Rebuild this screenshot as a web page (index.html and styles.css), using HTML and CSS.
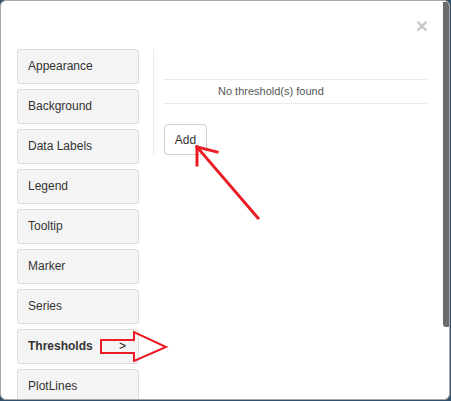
FILE: index.html
```html
<!DOCTYPE html>
<html>
<head>
<meta charset="utf-8">
<link rel="stylesheet" href="styles.css">
</head>
<body>
<div class="modal">
  <div class="modal-header">
    <span class="close">&times;</span>
  </div>
  <div class="modal-body">
    <nav class="nav">
      <div class="nav-item">Appearance</div>
      <div class="nav-item">Background</div>
      <div class="nav-item">Data Labels</div>
      <div class="nav-item">Legend</div>
      <div class="nav-item">Tooltip</div>
      <div class="nav-item">Marker</div>
      <div class="nav-item">Series</div>
      <div class="nav-item active"><span>Thresholds</span><span class="caret">&gt;</span></div>
      <div class="nav-item">PlotLines</div>
    </nav>
    <section class="content">
      <div class="empty-row">No threshold(s) found</div>
      <button class="add-btn">Add</button>
    </section>
  </div>
  <div class="scroll-thumb"></div>
  <svg class="annotations" width="450" height="400" viewBox="0 0 450 400">
    <g stroke="#ec1c24" fill="none" stroke-linecap="square" stroke-linejoin="miter">
      <path d="M258 218 L197 147" stroke-width="3"/>
      <path d="M197 147 L217 152" stroke-width="3"/>
      <path d="M197 147 L197 165" stroke-width="3"/>
      <polygon points="101,340 134,340 134,332 166,347 134,361 134,353 101,353" stroke-width="2"/>
    </g>
  </svg>
</div>
</body>
</html>
```
FILE: styles.css
```css
* { box-sizing: border-box; }
html, body { margin: 0; padding: 0; }
body {
  background: #34516c;
  font-family: "Liberation Sans", Arial, sans-serif;
  width: 451px;
  height: 401px;
  overflow: hidden;
}
.modal {
  position: relative;
  width: 450px;
  height: 400px;
  background: #fff;
  border: 1px solid #a8a8a8;
  border-radius: 6px;
  padding-left: 16px;
  overflow: hidden;
}
.modal-header {
  height: 48px;
  display: flex;
  justify-content: flex-end;
  align-items: flex-start;
  padding-top: 14px;
  padding-right: 21px;
}
.close {
  font-size: 21px;
  font-weight: bold;
  line-height: 1;
  color: #c9c9c9;
}
.modal-body {
  display: flex;
  align-items: flex-start;
}
.nav {
  width: 122px;
  display: flex;
  flex-direction: column;
  gap: 5px;
}
.nav-item {
  height: 35px;
  display: flex;
  align-items: center;
  justify-content: space-between;
  padding: 0 12px 2px 10px;
  background: #f4f4f4;
  border: 1px solid #dcdcdc;
  border-radius: 3px;
  font-size: 12px;
  color: #333;
}
.nav-item.active { font-weight: bold; }
.caret { font-weight: normal; color: #222; font-size: 12px; }
.content {
  margin-left: 14px;
  border-left: 1px solid #ececec;
  padding-left: 10px;
  width: 276px;
  padding-top: 30px;
  padding-bottom: 1px;
}
.empty-row {
  width: 264px;
  height: 25px;
  border-top: 1px dotted #d9d9d9;
  border-bottom: 1px dotted #d9d9d9;
  font-size: 11px;
  color: #555;
  line-height: 22px;
  padding-left: 54px;
}
.add-btn {
  margin-top: 20px;
  display: block;
  height: 31px;
  width: 43px;
  padding: 0;
  background: #fff;
  border: 1px solid #cfcfcf;
  border-radius: 4px;
  font-family: "Liberation Sans", Arial, sans-serif;
  font-size: 12px;
  color: #333;
}
.scroll-thumb {
  position: absolute;
  left: 442px;
  top: 1px;
  width: 7px;
  height: 325px;
  background: #6b6b6b;
  border-radius: 0 0 3px 3px;
}
.annotations {
  position: absolute;
  left: -1px;
  top: -1px;
  pointer-events: none;
}
```
